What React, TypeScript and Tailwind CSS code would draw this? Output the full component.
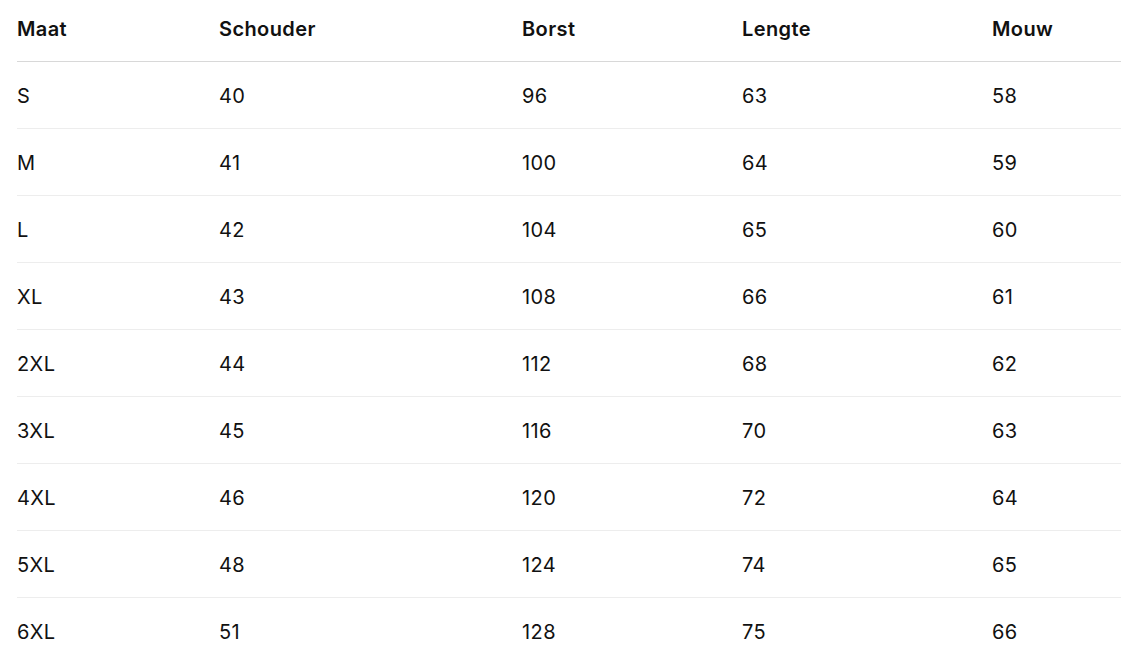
import React from "react";

const rows: string[][] = [
  ["S", "40", "96", "63", "58"],
  ["M", "41", "100", "64", "59"],
  ["L", "42", "104", "65", "60"],
  ["XL", "43", "108", "66", "61"],
  ["2XL", "44", "112", "68", "62"],
  ["3XL", "45", "116", "70", "63"],
  ["4XL", "46", "120", "72", "64"],
  ["5XL", "48", "124", "74", "65"],
  ["6XL", "51", "128", "75", "66"],
];

const headers = ["Maat", "Schouder", "Borst", "Lengte", "Mouw"];
const widths = ["w-[202px]", "w-[303px]", "w-[220px]", "w-[250px]", "w-[129px]"];

export default function App() {
  return (
    <div className="min-h-screen bg-white pl-[17px] pr-[5px] font-['Inter',sans-serif] text-[#111]">
      <table className="w-[1104px] table-fixed border-collapse text-left text-[20px] tracking-[0.02em]">
        <thead>
          <tr className="border-b border-[#d8d8d8]">
            {headers.map((h, i) => (
              <th key={h} className={`${widths[i]} h-[61px] pb-[2px] font-semibold`}>
                {h}
              </th>
            ))}
          </tr>
        </thead>
        <tbody>
          {rows.map((r, ri) => (
            <tr key={r[0]} className={ri < rows.length - 1 ? "border-b border-[#ededed]" : ""}>
              {r.map((c, ci) => (
                <td key={ci} className="h-[67px] pt-[2px] font-normal">
                  {c}
                </td>
              ))}
            </tr>
          ))}
        </tbody>
      </table>
    </div>
  );
}
